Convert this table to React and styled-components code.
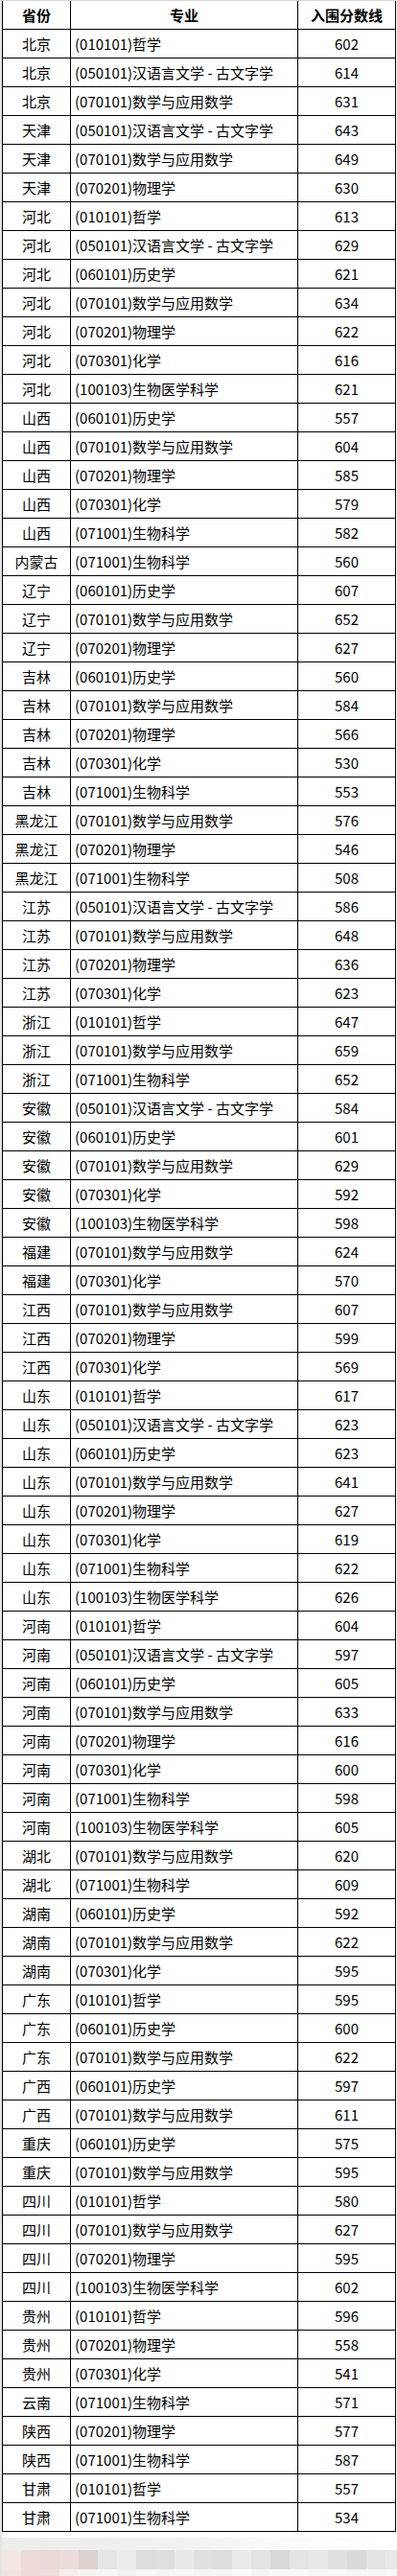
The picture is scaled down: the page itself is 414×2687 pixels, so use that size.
import React from 'react';
import styled, { createGlobalStyle } from 'styled-components';

const GlobalStyle = createGlobalStyle`
    html, body {
        margin: 0;
        padding: 0;
        background: #fff;
    }
    body {
        font-family: "Noto Sans CJK SC", "Microsoft YaHei", sans-serif;
        color: #000;
    }
`;

const majors = {
    '010101': '哲学',
    '050101': '汉语言文学 - 古文字学',
    '060101': '历史学',
    '070101': '数学与应用数学',
    '070201': '物理学',
    '070301': '化学',
    '071001': '生物科学',
    '100103': '生物医学科学',
};

// 省份, 专业代码, 入围分数线
const rows = [
    ['北京', '010101', 602], ['北京', '050101', 614], ['北京', '070101', 631],
    ['天津', '050101', 643], ['天津', '070101', 649], ['天津', '070201', 630],
    ['河北', '010101', 613], ['河北', '050101', 629], ['河北', '060101', 621],
    ['河北', '070101', 634], ['河北', '070201', 622], ['河北', '070301', 616],
    ['河北', '100103', 621],
    ['山西', '060101', 557], ['山西', '070101', 604], ['山西', '070201', 585],
    ['山西', '070301', 579], ['山西', '071001', 582],
    ['内蒙古', '071001', 560],
    ['辽宁', '060101', 607], ['辽宁', '070101', 652], ['辽宁', '070201', 627],
    ['吉林', '060101', 560], ['吉林', '070101', 584], ['吉林', '070201', 566],
    ['吉林', '070301', 530], ['吉林', '071001', 553],
    ['黑龙江', '070101', 576], ['黑龙江', '070201', 546], ['黑龙江', '071001', 508],
    ['江苏', '050101', 586], ['江苏', '070101', 648], ['江苏', '070201', 636],
    ['江苏', '070301', 623],
    ['浙江', '010101', 647], ['浙江', '070101', 659], ['浙江', '071001', 652],
    ['安徽', '050101', 584], ['安徽', '060101', 601], ['安徽', '070101', 629],
    ['安徽', '070301', 592], ['安徽', '100103', 598],
    ['福建', '070101', 624], ['福建', '070301', 570],
    ['江西', '070101', 607], ['江西', '070201', 599], ['江西', '070301', 569],
    ['山东', '010101', 617], ['山东', '050101', 623], ['山东', '060101', 623],
    ['山东', '070101', 641], ['山东', '070201', 627], ['山东', '070301', 619],
    ['山东', '071001', 622], ['山东', '100103', 626],
    ['河南', '010101', 604], ['河南', '050101', 597], ['河南', '060101', 605],
    ['河南', '070101', 633], ['河南', '070201', 616], ['河南', '070301', 600],
    ['河南', '071001', 598], ['河南', '100103', 605],
    ['湖北', '070101', 620], ['湖北', '071001', 609],
    ['湖南', '060101', 592], ['湖南', '070101', 622], ['湖南', '070301', 595],
    ['广东', '010101', 595], ['广东', '060101', 600], ['广东', '070101', 622],
    ['广西', '060101', 597], ['广西', '070101', 611],
    ['重庆', '060101', 575], ['重庆', '070101', 595],
    ['四川', '010101', 580], ['四川', '070101', 627], ['四川', '070201', 595],
    ['四川', '100103', 602],
    ['贵州', '010101', 596], ['贵州', '070201', 558], ['贵州', '070301', 541],
    ['云南', '071001', 571],
    ['陕西', '070201', 577], ['陕西', '071001', 587],
    ['甘肃', '010101', 557], ['甘肃', '071001', 534],
];

// pixelated blur strip under the table
const tilesTop = [
    '#f3e6e3', '#eedad6', '#ead7d5', '#ecdbdb', '#ddd3d1', '#e5e5e5', '#ebebeb',
    '#dcdcdc', '#dedede', '#e8e8e8', '#e0e0e0', '#dddddd', '#eaeaea', '#e3e3e3',
    '#dadada', '#e4e4e4', '#e9e9e9', '#e0e0e0', '#d9d9d9', '#e3e3e3', '#e8e8e8',
];
const tilesBottom = [
    '#f4e2e2', '#efd8d8', '#f2dede', '#f6eeee', '#f3f3f3', '#f6f6f6', '#f2f2f2',
    '#f7f7f7', '#f4f4f4', '#f8f8f8', '#f5f5f5', '#f6f6f6', '#f9f9f9', '#f4f4f4',
    '#f7f7f7', '#f8f8f8', '#f6f6f6', '#f9f9f9', '#f5f5f5', '#f7f7f7', '#f8f8f8',
];

const Page = styled.div`
    width: 414px;
    min-height: 2687px;
    display: flex;
    flex-direction: column;
    background: #fff;
    border-left: 2px solid #e4e4e4;
    box-sizing: border-box;
`;

const Sheet = styled.div`
    width: 411px;
    display: flex;
    flex-direction: column;
    border-top: 1px solid #d6d6d6;
`;

const Row = styled.div`
    display: grid;
    grid-template-columns: 71px 237px 102px;
    height: ${p => (p.$head ? 30 : 30)}px;
    box-sizing: border-box;
    border-bottom: 1px solid #000;
    border-right: 1px solid #000;
    font-size: 15px;
    font-weight: ${p => (p.$head ? 700 : 400)};
`;

const Cell = styled.div`
    display: flex;
    align-items: center;
    justify-content: ${p => (p.$left ? 'flex-start' : 'center')};
    padding-left: ${p => (p.$left ? '4px' : '0')};
    border-left: 1px solid #000;
    white-space: nowrap;
    line-height: 1;
    padding-bottom: 1px;
    box-sizing: border-box;
`;

const Haze = styled.div`
    margin-top: 6px;
    height: 13px;
    background: linear-gradient(90deg, #ececec 0%, #f1f1f1 45%, #fafafa 70%, #fff 100%);
`;

const TileRow = styled.div`
    display: flex;
    height: ${p => p.$h}px;
`;

const Tile = styled.div`
    flex: 0 0 20px;
    background: ${p => p.$bg};
`;

export default function App() {
    return (
        <Page>
            <GlobalStyle />
            <Sheet>
                <Row $head>
                    <Cell>省份</Cell>
                    <Cell>专业</Cell>
                    <Cell>入围分数线</Cell>
                </Row>
                {rows.map(([prov, code, score], i) => (
                    <Row key={i}>
                        <Cell>{prov}</Cell>
                        <Cell $left>({code}){majors[code]}</Cell>
                        <Cell>{score}</Cell>
                    </Row>
                ))}
            </Sheet>
            <Haze />
            <TileRow $h={20}>
                {tilesTop.map((c, i) => <Tile key={i} $bg={c} />)}
            </TileRow>
            <TileRow $h={7}>
                {tilesBottom.map((c, i) => <Tile key={i} $bg={c} />)}
            </TileRow>
        </Page>
    );
}
